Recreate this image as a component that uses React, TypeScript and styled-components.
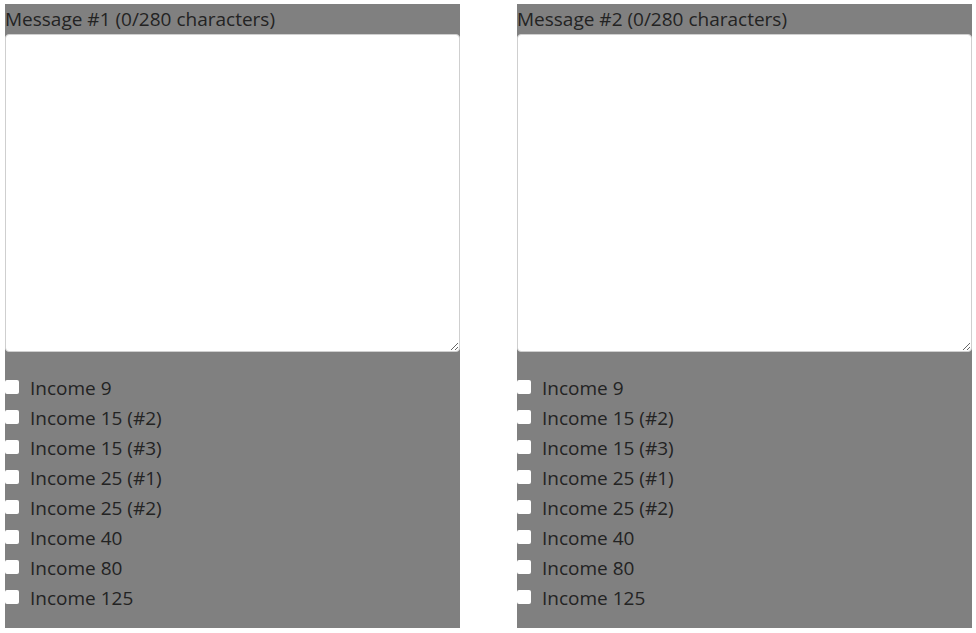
import React from "react";
import styled, { createGlobalStyle } from "styled-components";

const Global = createGlobalStyle`
  html, body { margin: 0; padding: 0; background: #ffffff; }
  body { font-family: "Open Sans", "Noto Sans", sans-serif; }
`;

const Page = styled.div`
  display: flex;
  gap: 57px;
  padding: 4px 0 0 5px;
`;

const Panel = styled.section`
  width: 455px;
  background: #808080;
  display: flex;
  flex-direction: column;
  padding-bottom: 15px;
`;

const Label = styled.label`
  font-size: 19px;
  line-height: 31px;
  height: 30px;
  color: #232323;
`;

const Area = styled.textarea`
  box-sizing: border-box;
  width: 455px;
  height: 318px;
  margin: 0;
  border: 1px solid #cfcfcf;
  border-radius: 4px;
  background: #ffffff;
  font-family: inherit;
  resize: both;
`;

const List = styled.div`
  display: flex;
  flex-direction: column;
  margin-top: 21px;
`;

const Row = styled.label`
  display: flex;
  align-items: center;
  height: 30px;
  font-size: 19px;
  color: #232323;
`;

const Box = styled.input`
  width: 14px;
  height: 14px;
  margin: 0 11px 2px 0;
  appearance: none;
  background: #ffffff;
  border-radius: 2px;
  border: none;
`;

const incomes = [
  "Income 9",
  "Income 15 (#2)",
  "Income 15 (#3)",
  "Income 25 (#1)",
  "Income 25 (#2)",
  "Income 40",
  "Income 80",
  "Income 125",
];

function Message({ n }: { n: number }) {
  return (
    <Panel>
      <Label>Message #{n} (0/280 characters)</Label>
      <Area />
      <List>
        {incomes.map((t) => (
          <Row key={t}>
            <Box type="checkbox" />
            {t}
          </Row>
        ))}
      </List>
    </Panel>
  );
}

export default function App() {
  return (
    <>
      <Global />
      <Page>
        <Message n={1} />
        <Message n={2} />
      </Page>
    </>
  );
}
